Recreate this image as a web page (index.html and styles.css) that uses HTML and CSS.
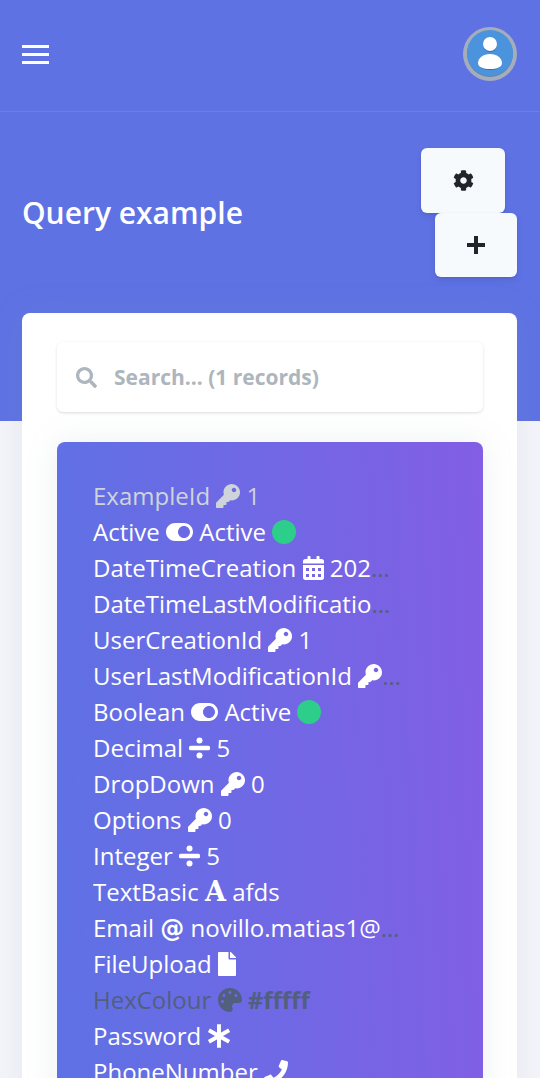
FILE: index.html
```html
<!DOCTYPE html>
<html lang="en">
<head>
<meta charset="utf-8">
<meta name="viewport" content="width=device-width, initial-scale=1">
<title>Query example</title>
<link rel="stylesheet" href="styles.css">
</head>
<body>
<svg class="sprite" aria-hidden="true">
  <symbol id="key" viewBox="0 0 512 512"><path d="M512 176.001C512 273.203 433.202 352 336 352c-11.22 0-22.19-1.062-32.827-3.069l-24.012 27.014A23.999 23.999 0 0 1 261.223 384H224v40c0 13.255-10.745 24-24 24h-40v40c0 13.255-10.745 24-24 24H24c-13.255 0-24-10.745-24-24v-78.059c0-6.365 2.529-12.47 7.029-16.971l161.802-161.802C163.108 213.814 160 195.271 160 176 160 78.798 238.797.001 335.999 0 433.488-.001 512 78.511 512 176.001zM336 128c0 26.51 21.49 48 48 48s48-21.49 48-48-21.49-48-48-48-48 21.49-48 48z"/></symbol>
  <symbol id="toggle" viewBox="0 0 576 512"><path d="M384 64H192C86 64 0 150 0 256s86 192 192 192h192c106 0 192-86 192-192S490 64 384 64zm0 320c-70.8 0-128-57.3-128-128 0-70.8 57.3-128 128-128 70.8 0 128 57.3 128 128 0 70.8-57.3 128-128 128z"/></symbol>
  <symbol id="calendar" viewBox="0 0 448 512"><path fill-rule="evenodd" d="M0 464c0 26.500 21.500 48 48 48h352c26.500 0 48-21.500 48-48V192H0zM64 256h64v64H64zM192 256h64v64h-64zM320 256h64v64h-64zM64 384h64v64H64zM192 384h64v64h-64zM320 384h64v64h-64zM400 64h-48V16c0-8.800-7.200-16-16-16h-32c-8.800 0-16 7.200-16 16v48H160V16c0-8.800-7.200-16-16-16h-32c-8.800 0-16 7.200-16 16v48H48C21.500 64 0 85.500 0 112v48h448v-48c0-26.500-21.500-48-48-48z"/></symbol>
  <symbol id="divide" viewBox="0 0 448 512"><circle cx="224" cy="96" r="64"/><circle cx="224" cy="416" r="64"/><rect y="208" width="448" height="96" rx="32"/></symbol>
  <symbol id="file" viewBox="0 0 384 512"><path d="M224 136V0H24C10.700 0 0 10.700 0 24v464c0 13.300 10.700 24 24 24h336c13.300 0 24-10.700 24-24V160H248c-13.200 0-24-10.800-24-24zm160-14.100v6.100H256V0h6.100c6.400 0 12.500 2.500 17 7l97.900 98c4.500 4.500 7 10.600 7 16.900z"/></symbol>
  <symbol id="palette" viewBox="0 0 512 512"><path d="M204.300 5C104.900 24.400 24.800 104.300 5.200 203.400c-37 187 131.700 326.400 258.800 306.700 41.200-6.400 61.400-54.600 42.500-91.700-23.100-45.400 9.900-98.400 60.900-98.400h79.700c35.800 0 64.800-29.600 64.900-65.300C511.500 97.100 368.100-26.900 204.300 5zM96 320c-17.700 0-32-14.300-32-32s14.300-32 32-32 32 14.300 32 32-14.300 32-32 32zm32-128c-17.700 0-32-14.300-32-32s14.300-32 32-32 32 14.300 32 32-14.300 32-32 32zm128-64c-17.700 0-32-14.300-32-32s14.300-32 32-32 32 14.300 32 32-14.300 32-32 32zm128 64c-17.700 0-32-14.300-32-32s14.300-32 32-32 32 14.300 32 32-14.300 32-32 32z"/></symbol>
  <symbol id="asterisk" viewBox="0 0 512 512"><path fill="none" stroke="currentColor" stroke-width="84" stroke-linejoin="round" d="M256 6v500M40 132l432 248M472 132L40 380"/></symbol>
  <symbol id="phone" viewBox="0 0 512 512"><path d="M493.400 24.600l-104-24c-11.300-2.600-22.900 3.300-27.500 13.900l-48 112c-4.200 9.800-1.400 21.300 6.900 28l60.600 49.600c-36 76.700-98.900 140.500-177.200 177.200l-49.600-60.600c-6.800-8.300-18.200-11.100-28-6.900l-112 48C3.900 366.500-2 378.100.6 389.400l24 104C27.100 504.200 36.700 512 48 512c256.100 0 464-207.500 464-464 0-11.200-7.700-20.900-18.600-23.400z"/></symbol>
</svg>

<header class="hero">
  <nav class="navbar">
    <button class="menu" type="button" aria-label="Menu"><span></span><span></span><span></span></button>
    <button class="avatar" type="button" aria-label="Account">
      <svg viewBox="0 0 54 54"><circle cx="27" cy="27" r="27" fill="#a5adbd"/><circle cx="27" cy="27" r="23" fill="#5f86ad"/><circle cx="27" cy="26" r="23" fill="#4c93dd"/><g fill="#376fae"><circle cx="27" cy="18" r="7"/><rect x="15" y="28" width="24" height="15" rx="11" ry="7"/></g><g fill="#fff"><circle cx="27" cy="17" r="7"/><path d="M27 27C34 27 39 31 39 36C39 40 34 42 27 42S15 40 15 36C15 31 20 27 27 27z"/></g></svg>
    </button>
  </nav>
  <div class="heading">
    <h1>Query example</h1>
    <div class="actions">
      <button class="action settings" type="button" aria-label="Settings"><svg width="21" height="21" viewBox="0 0 512 512"><path d="M487.400 315.700l-42.600-24.600c4.300-23.200 4.300-47 0-70.200l42.600-24.600c4.900-2.800 7.100-8.600 5.500-14-11.100-35.600-30-67.800-54.700-94.600-3.800-4.100-10-5.100-14.800-2.300L380.800 110c-17.900-15.400-38.500-27.300-60.800-35.100V25.800c0-5.600-3.900-10.500-9.400-11.700-36.700-8.200-74.300-7.800-109.200 0-5.500 1.200-9.400 6.100-9.400 11.700V75c-22.200 7.900-42.800 19.800-60.800 35.100L88.700 85.500c-4.900-2.800-11-1.900-14.800 2.300-24.700 26.700-43.600 58.900-54.700 94.600-1.700 5.400.6 11.200 5.500 14L67.300 221c-4.300 23.200-4.300 47 0 70.200l-42.600 24.600c-4.900 2.800-7.100 8.600-5.500 14 11.100 35.600 30 67.800 54.700 94.600 3.800 4.100 10 5.100 14.800 2.300l42.600-24.600c17.900 15.400 38.500 27.300 60.800 35.100v49.200c0 5.600 3.900 10.500 9.400 11.700 36.700 8.200 74.300 7.800 109.200 0 5.500-1.200 9.400-6.100 9.400-11.700v-49.200c22.200-7.900 42.800-19.800 60.800-35.100l42.600 24.600c4.900 2.800 11 1.900 14.800-2.300 24.700-26.700 43.600-58.900 54.700-94.600 1.500-5.500-.7-11.300-5.600-14.100zM256 336c-44.100 0-80-35.900-80-80s35.900-80 80-80 80 35.900 80 80-35.900 80-80 80z"/></svg></button>
      <button class="action" type="button" aria-label="Add"><svg width="18" height="18" viewBox="0 0 18 18"><path d="M7 0h4v7h7v4h-7v7H7v-7H0V7h7z"/></svg></button>
    </div>
  </div>
</header>

<main class="card">
  <label class="search">
    <svg width="21" height="21" viewBox="0 0 512 512" aria-hidden="true"><path d="M505 442.700L405.300 343c-4.500-4.500-10.600-7-17-7H372c27.600-35.300 44-79.700 44-128C416 93.100 322.900 0 208 0S0 93.100 0 208s93.100 208 208 208c48.300 0 92.700-16.400 128-44v16.300c0 6.400 2.500 12.500 7 17l99.700 99.700c9.400 9.400 24.600 9.400 33.900 0l28.300-28.300c9.400-9.400 9.400-24.600.1-34zM208 336c-70.700 0-128-57.200-128-128 0-70.700 57.200-128 128-128 70.700 0 128 57.200 128 128 0 70.700-57.200 128-128 128z"/></svg>
    <input type="search" aria-label="Search" placeholder="Search... (1 records)">
  </label>
  <ul class="record">
    <li><span class="light">ExampleId <svg class="icon"><use href="#key"/></svg> 1</span></li>
    <li><span>Active <svg class="icon wide"><use href="#toggle"/></svg> Active <i class="dot"></i></span></li>
    <li><span>DateTimeCreation <svg class="icon narrow"><use href="#calendar"/></svg> 2023-01-01</span></li>
    <li><span>DateTimeLastModification <svg class="icon narrow"><use href="#calendar"/></svg></span></li>
    <li><span>UserCreationId <svg class="icon"><use href="#key"/></svg> 1</span></li>
    <li><span>UserLastModificationId <svg class="icon"><use href="#key"/></svg> 1</span></li>
    <li><span>Boolean <svg class="icon wide"><use href="#toggle"/></svg> Active <i class="dot"></i></span></li>
    <li><span>Decimal <svg class="icon narrow"><use href="#divide"/></svg> 5</span></li>
    <li><span>DropDown <svg class="icon"><use href="#key"/></svg> 0</span></li>
    <li><span>Options <svg class="icon"><use href="#key"/></svg> 0</span></li>
    <li><span>Integer <svg class="icon narrow"><use href="#divide"/></svg> 5</span></li>
    <li><span>TextBasic <b class="letter">A</b> afds</span></li>
    <li><span>Email <b class="at">@</b> novillo.matias1@gmail.com</span></li>
    <li><span>FileUpload <svg class="icon slim"><use href="#file"/></svg></span></li>
    <li>HexColour <svg class="icon"><use href="#palette"/></svg> <b>#fffff</b></li>
    <li><span>Password <svg class="icon"><use href="#asterisk"/></svg></span></li>
    <li><span>PhoneNumber <svg class="icon"><use href="#phone"/></svg></span></li>
  </ul>
</main>
</body>
</html>
```
FILE: styles.css
```css
* {
  box-sizing: border-box;
}

body {
  margin: 0;
  height: 100vh;
  overflow: hidden;
  background: #f4f5fa;
  color: #525f7f;
  font: 24px/36px "Open Sans", sans-serif;
}

button {
  border: 0;
  padding: 0;
  cursor: pointer;
}

svg {
  fill: currentColor;
}

.sprite {
  position: absolute;
  width: 0;
  height: 0;
}

.hero {
  background: #5e72e4;
  padding-bottom: 144px;
}

.navbar {
  display: flex;
  align-items: center;
  justify-content: space-between;
  padding: 27px 23px 30px 22px;
  border-bottom: 1px solid #6b7ee7;
}

.menu {
  display: grid;
  gap: 5px;
  width: 27px;
  background: none;
}

.menu span {
  height: 3px;
  background: #fff;
}

.avatar {
  width: 54px;
  height: 54px;
  border-radius: 50%;
  background: none;
}

.avatar svg {
  display: block;
}

.heading {
  display: flex;
  align-items: center;
  justify-content: space-between;
  padding: 36px 23px 0 22px;
}

h1 {
  margin: 0;
  color: #fff;
  font-size: 30px;
  font-weight: 600;
  line-height: 45px;
}

.actions {
  display: flex;
  flex-direction: column;
  align-items: flex-end;
}

.action {
  display: grid;
  place-items: center;
  width: 82px;
  height: 64px;
  border-radius: 6px;
  background: #f7fafc;
  color: #212529;
  box-shadow: 0 4px 6px rgba(50, 50, 93, .11), 0 1px 3px rgba(0, 0, 0, .08);
}

.settings {
  width: 84px;
  height: 65px;
  margin-right: 12px;
}

.card {
  position: relative;
  margin: -108px 23px 0 22px;
  padding: 29px 34px 36px 35px;
  border-radius: 8px;
  background: #fff;
  box-shadow: 0 0 32px rgba(136, 152, 170, .15);
}

.search {
  display: flex;
  align-items: center;
  gap: 17px;
  height: 70px;
  padding: 0 19px;
  border-radius: 6px;
  color: #adb5bd;
  background: #fff;
  box-shadow: 0 1px 3px rgba(50, 50, 93, .15), 0 1px 0 rgba(0, 0, 0, .02);
}

.search input {
  flex: 1;
  min-width: 0;
  border: 0;
  padding: 0;
  outline: 0;
  background: none;
  color: #525f7f;
  font: 700 21px/32px "Open Sans", sans-serif;
}

.search input::placeholder {
  color: #adb5bd;
  opacity: 1;
}

.record {
  margin: 30px 0 0;
  padding: 36px 82px 36px 36px;
  border-radius: 8px;
  list-style: none;
  background: linear-gradient(87deg, #5e72e4, #825ee4);
  box-shadow: 0 0 32px rgba(136, 152, 170, .15);
}

.record li {
  height: 36px;
  overflow: hidden;
  text-overflow: ellipsis;
  white-space: nowrap;
}

.record span {
  color: #fff;
}

.record .light {
  color: #ced4da;
}

.icon {
  width: 24px;
  height: 24px;
  vertical-align: -3px;
}

.wide {
  width: 27px;
}

.narrow {
  width: 21px;
}

.slim {
  width: 18px;
}

.dot {
  display: inline-block;
  width: 24px;
  height: 24px;
  border-radius: 50%;
  vertical-align: -3px;
  background: #2dce89;
}

.letter,
.at {
  display: inline-flex;
  justify-content: center;
  width: 21px;
  font: 700 27px/27px "DejaVu Serif", serif;
}

.at {
  width: 24px;
  font: 700 24px/27px "DejaVu Sans", sans-serif;
}
```
